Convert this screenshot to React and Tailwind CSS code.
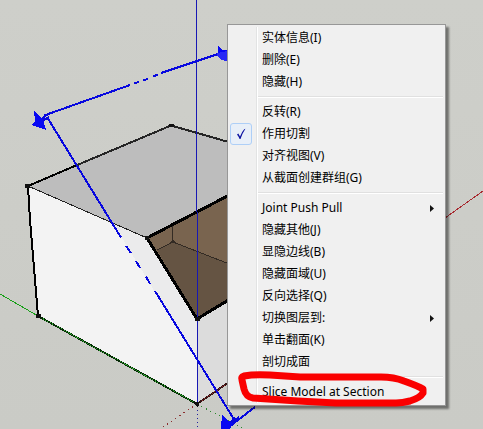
import React from 'react';

const MENU_GROUPS = [
    [
        { label: '实体信息(I)' },
        { label: '删除(E)' },
        { label: '隐藏(H)' },
    ],
    [
        { label: '反转(R)' },
        { label: '作用切割', checked: true },
        { label: '对齐视图(V)' },
        { label: '从截面创建群组(G)' },
    ],
    [
        { label: 'Joint Push Pull', submenu: true },
        { label: '隐藏其他(J)' },
        { label: '显隐边线(B)' },
        { label: '隐藏面域(U)' },
        { label: '反向选择(Q)' },
        { label: '切换图层到:', submenu: true },
        { label: '单击翻面(K)' },
        { label: '剖切成面' },
    ],
    [{ label: 'Slice Model at Section' }],
];

export default function App() {
    return (
        <main className="relative h-screen w-full overflow-hidden bg-[#cdcec9] font-['Noto_Sans','Noto_Sans_CJK_SC',sans-serif]">
            <ModelScene />
            <ContextMenu />
            <MarkerStroke />
        </main>
    );
}

function ContextMenu() {
    return (
        <div
            role="menu"
            className="absolute left-[227px] top-6 w-[219px] border border-[#979797] bg-[#f0f0f0] py-0.5 shadow-[3px_3px_2px_rgba(0,0,0,0.45)]"
        >
            {/* gutter line between the check column and the labels */}
            <div className="absolute inset-y-0.5 left-7 w-0.5 border-l border-[#e2e3e3] bg-white" />
            {MENU_GROUPS.map((items, index) => (
                <React.Fragment key={items[0].label}>
                    {index > 0 && (
                        <div role="separator" className="relative ml-[30px] mr-0.5 flex h-2 items-center">
                            <div className="h-0.5 w-full border-t border-[#e0e0e0] bg-white" />
                        </div>
                    )}
                    {items.map((item) => (
                        <MenuItem key={item.label} {...item} />
                    ))}
                </React.Fragment>
            ))}
        </div>
    );
}

function MenuItem({ label, checked, submenu }) {
    return (
        <button
            type="button"
            role={checked ? 'menuitemcheckbox' : 'menuitem'}
            aria-checked={checked}
            aria-haspopup={submenu ? 'menu' : undefined}
            className="relative flex h-[22px] w-full items-center pr-[11px] text-left text-xs text-black"
        >
            <span className="flex w-[34px] shrink-0 pl-0.5">
                {checked && (
                    <span className="flex size-[22px] items-center justify-center rounded-[3px] border border-[#aecff7] bg-[#e8eff8]">
                        <svg viewBox="0 0 10 12" className="h-3 w-2.5" fill="#0c12a1">
                            <path d="M1 6.4 2.3 5.4 4 8.4Q5.6 4 8.2 1.2L9.4.8Q6.4 5.4 4.5 11L3.6 11Q2.6 8.4 1 6.4Z" />
                        </svg>
                    </span>
                )}
            </span>
            <span className="flex-1 whitespace-nowrap">{label}</span>
            {submenu && (
                <svg viewBox="0 0 4 7" className="h-[7px] w-1" fill="#111">
                    <path d="M0 0 4 3.5 0 7Z" />
                </svg>
            )}
        </button>
    );
}

function ModelScene() {
    return (
        <svg
            viewBox="0 0 483 429"
            preserveAspectRatio="xMinYMin slice"
            className="absolute inset-0 size-full"
            fill="none"
            aria-hidden="true"
            shapeRendering="crispEdges"
        >
            <defs>
                <linearGradient id="ground" x1="0" y1="0" x2="0" y2="1">
                    <stop offset="0" stopColor="#cecfca" />
                    <stop offset="1" stopColor="#cacbc6" />
                </linearGradient>
            </defs>
            <rect width="483" height="429" fill="url(#ground)" />

            {/* faces */}
            <path d="M28 186 171 125 260 150 260 186 147 238Z" fill="#bdbdbd" />
            <path d="M28 186 147 238 197 319 197 404 38 316Z" fill="#f3f3f3" />
            <path d="M113 223 147 238 197 319 197 361Z" fill="#ebebec" />
            <path d="M197 319 260 282 260 362 197 404Z" fill="#dcdcdc" />
            <path d="M147 238 260 179 260 282 197 319Z" fill="#79644f" />
            <path d="M157 250 173 242 260 276 260 282 197 319Z" fill="#655443" />

            {/* inner edges */}
            <path d="M172.5 225V242M157 250 173 242 260 276" stroke="#332b24" />
            <path d="M170 243 173 239 176 243Z" fill="#332b24" />

            {/* outline */}
            <path d="M28 186 147 238" stroke="#222" />
            <path d="M28 186 76 165.5" stroke="#000" strokeWidth="2" />
            <path d="M76 165.5 171 125.5 260 151" stroke="#252525" strokeWidth="2" />
            <path d="M28 186 30 220 38 316" stroke="#000" strokeWidth="2" />
            <path d="M260 179 147 238 197 319 260 281" stroke="#000" strokeWidth="3" />

            {/* axes */}
            <path d="M0 294 38 316" stroke="#18a018" />
            <path d="M38 316 197 404" stroke="#062b06" strokeWidth="2" />
            <path d="M38 316 197 404" stroke="#2fa82f" strokeDasharray="1 1" />
            <path d="M197 404 260 361" stroke="#351414" strokeWidth="2" />
            <path d="M197 404 260 361" stroke="#9b3030" strokeDasharray="1 2" />
            <path d="M445 218 483 191" stroke="#a82a30" />
            <path d="M197 404 160 429" stroke="#8c3030" strokeDasharray="1 4" />
            <path d="M197 404 245 429" stroke="#2b872b" strokeDasharray="1 4" />
            <path d="M197.5 406V429" stroke="#2020a0" strokeDasharray="1 3" />
            <path d="M196.5 0V212M197.5 212V404" stroke="#1818b4" />
            <path
                d="M25 184h5v4h-5zM36 314h5v4h-5zM169 124h5v3h-5zM145 236h4v4h-4zM195 317h5v4h-5zM194 402h6l-1 3-2 2-2-2z"
                fill="#111"
            />

            {/* section plane */}
            <g stroke="#0808df" strokeWidth="2">
                <path d="M44 115.5 130 85M134 83.5 139 82M143 80.5 148 79M153 76.5 158 74.5M161 73 230 50" />
                <path d="M47 117 121 237.5M126 246 131 253M136 261 140 268M146 276.5 150 284M155 291 235 421" />
                <path d="M229 427 255 407" />
                <path d="M39 121 48 114M40 122 49 117M226 427 235 418M231 423 239 417" />
            </g>
            <g fill="#0808f2">
                <path d="M34 111 38 115 43 119 46 130 32 125 35 121Z" />
                <path d="M218 46 222 50 227 50V54L218 55Z" />
                <path d="M222 414 227 420 233 423 230 429H221Z" />
            </g>
            <path d="M217 53 227 51V61L221 60 217 56Z" fill="#2929f5" />
        </svg>
    );
}

// hand-drawn ring around the last menu entry
function MarkerStroke() {
    return (
        <svg
            viewBox="0 0 192 40"
            className="pointer-events-none absolute left-[236px] top-[369px] h-10 w-48"
            fill="none"
            aria-hidden="true"
        >
            <path
                d="M8 7Q18 5 34 6L64 8 145 8Q158 8 168 12 182 17 187 20L187 24Q184 29 174 32 166 34 160 34H137L100 34 62 32 32 30 17 29Q10 28 8 20L6 11Q5 8 8 7Z"
                stroke="#fa0000"
                strokeWidth="7"
                strokeLinejoin="round"
            />
        </svg>
    );
}
